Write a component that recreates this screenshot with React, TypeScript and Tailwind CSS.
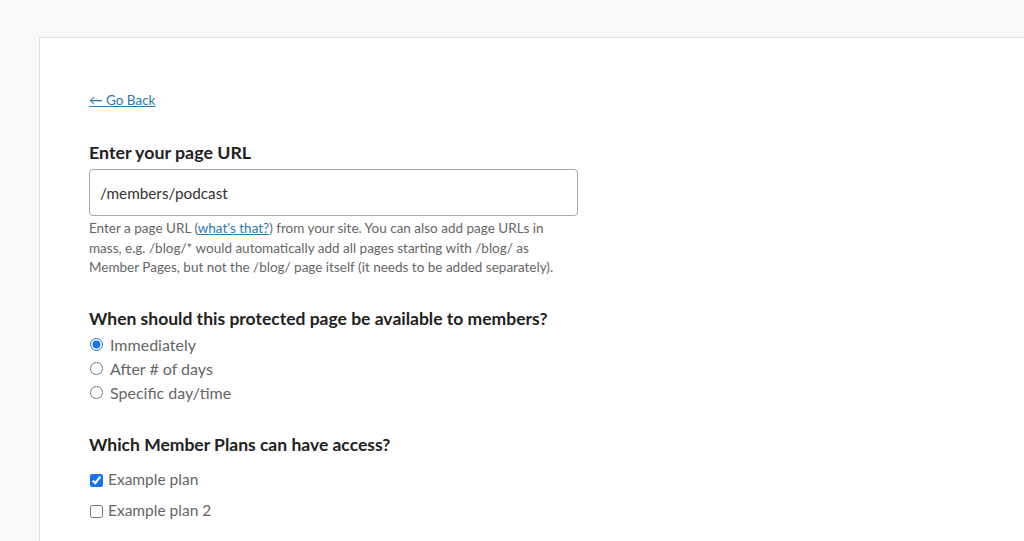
import React from 'react';

const RadioRow: React.FC<{ label: string; checked?: boolean }> = ({ label, checked }) => (
  <label className="flex h-[24px] items-center gap-[7px] text-[16px] text-[#666]">
    <input type="radio" name="when" defaultChecked={checked} className="m-0 ml-[1px] h-[13px] w-[13px] accent-[#1a73e8]" />
    <span>{label}</span>
  </label>
);

const CheckRow: React.FC<{ label: string; checked?: boolean }> = ({ label, checked }) => (
  <label className="flex h-[31px] items-center gap-[5px] text-[15.5px] text-[#666]">
    <input type="checkbox" defaultChecked={checked} className="m-0 ml-[1px] h-[13px] w-[13px] accent-[#1a73e8]" />
    <span>{label}</span>
  </label>
);

export default function App() {
  return (
    <div className="min-h-[541px] overflow-hidden bg-[#f9f9f9] pt-[37px] pl-[39px]" style={{ fontFamily: 'Lato, "Open Sans", sans-serif' }}>
      <div className="min-h-[504px] border border-r-0 border-b-0 border-[#e0e0e0] bg-white pt-[52px] pl-[49px]">
        <a href="#" className="block text-[13.5px] leading-[20px] text-[#2a7ab0] underline">← Go Back</a>

        <h2 className="mt-[30px] text-[17.8px] font-bold leading-[24px] text-[#222]">Enter your page URL</h2>
        <input
          type="text"
          defaultValue="/members/podcast"
          className="mt-[5px] block h-[47px] w-[489px] rounded-[4px] border border-[#a9a9a9] px-[10px] text-[15.3px] text-[#333] outline-none"
        />
        <p className="mt-[3px] w-[480px] text-[13.5px] leading-[19.5px] text-[#666]">
          Enter a page URL (<a href="#" className="text-[#2a7ab0] underline">what's that?</a>) from your site. You can also add page URLs in mass, e.g. /blog/* would automatically add all pages starting with /blog/ as Member Pages, but not the /blog/ page itself (it needs to be added separately).
        </p>

        <h2 className="mt-[29px] text-[17.5px] font-bold leading-[24px] text-[#222]">When should this protected page be available to members?</h2>
        <div className="mt-[2px] flex flex-col">
          <RadioRow label="Immediately" checked />
          <RadioRow label="After # of days" />
          <RadioRow label="Specific day/time" />
        </div>

        <h2 className="mt-[28px] text-[17.5px] font-bold leading-[24px] text-[#222]">Which Member Plans can have access?</h2>
        <div className="mt-[8px] flex flex-col">
          <CheckRow label="Example plan" checked />
          <CheckRow label="Example plan 2" />
        </div>
      </div>
    </div>
  );
}
